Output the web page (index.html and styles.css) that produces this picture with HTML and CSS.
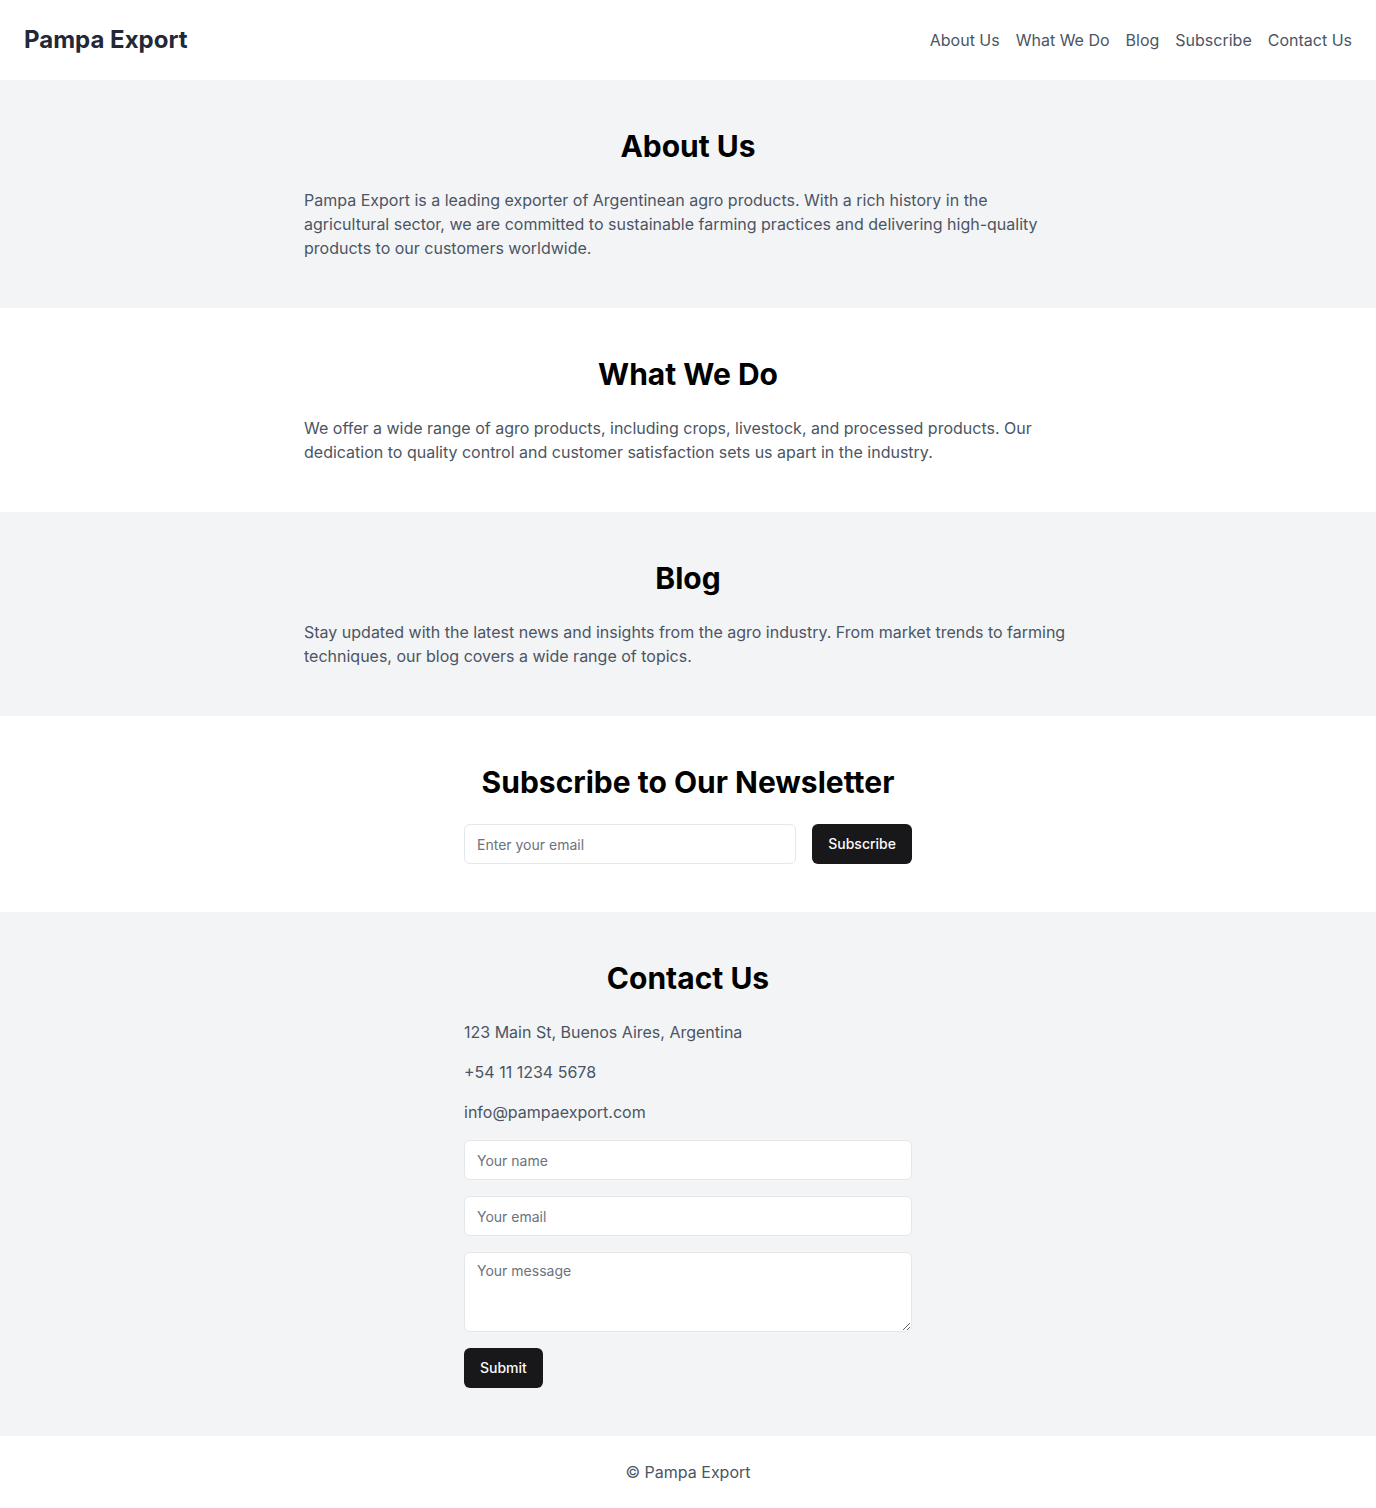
FILE: index.html
```html
<!DOCTYPE html>
<html lang="en">
<head>
<meta charset="utf-8">
<title>Pampa Export</title>
<link rel="stylesheet" href="styles.css">
</head>
<body>
<header class="site-header">
  <div class="logo">Pampa Export</div>
  <nav class="nav">
    <a href="#about">About Us</a>
    <a href="#what">What We Do</a>
    <a href="#blog">Blog</a>
    <a href="#subscribe">Subscribe</a>
    <a href="#contact">Contact Us</a>
  </nav>
</header>
<main>
  <section id="about" class="section gray">
    <h2 class="title">About Us</h2>
    <p class="text">Pampa Export is a leading exporter of Argentinean agro products. With a rich history in the agricultural sector, we are committed to sustainable farming practices and delivering high-quality products to our customers worldwide.</p>
  </section>
  <section id="what" class="section">
    <h2 class="title">What We Do</h2>
    <p class="text">We offer a wide range of agro products, including crops, livestock, and processed products. Our dedication to quality control and customer satisfaction sets us apart in the industry.</p>
  </section>
  <section id="blog" class="section gray">
    <h2 class="title">Blog</h2>
    <p class="text">Stay updated with the latest news and insights from the agro industry. From market trends to farming techniques, our blog covers a wide range of topics.</p>
  </section>
  <section id="subscribe" class="section">
    <h2 class="title">Subscribe to Our Newsletter</h2>
    <form class="sub-form">
      <input class="field grow" type="email" placeholder="Enter your email">
      <button class="btn" type="button">Subscribe</button>
    </form>
  </section>
  <section id="contact" class="section gray">
    <h2 class="title">Contact Us</h2>
    <div class="contact">
      <p class="line">123 Main St, Buenos Aires, Argentina</p>
      <p class="line">+54 11 1234 5678</p>
      <p class="line">info@pampaexport.com</p>
      <form class="contact-form">
        <input class="field" type="text" placeholder="Your name">
        <input class="field" type="email" placeholder="Your email">
        <textarea class="field area" placeholder="Your message"></textarea>
        <div><button class="btn" type="button">Submit</button></div>
      </form>
    </div>
  </section>
</main>
<footer class="footer">© Pampa Export</footer>
</body>
</html>
```

FILE: styles.css
```css
* { box-sizing: border-box; }
html, body { margin: 0; padding: 0; }
body {
  font-family: Inter, "Noto Sans", "Liberation Sans", sans-serif;
  font-size: 16px;
  line-height: 24px;
  color: #000;
  background: #fff;
}
.site-header {
  height: 80px;
  padding: 0 24px;
  display: flex;
  align-items: center;
  justify-content: space-between;
  background: #fff;
}
.logo {
  font-size: 24px;
  line-height: 32px;
  font-weight: 700;
  color: #1f2937;
}
.nav { display: flex; gap: 16px; }
.nav a {
  color: #4b5563;
  text-decoration: none;
  font-size: 16px;
  line-height: 24px;
}
.section {
  padding: 48px 0;
  background: #fff;
}
.section.gray { background: #f3f4f6; }
.title {
  margin: 0 0 24px;
  text-align: center;
  font-size: 30px;
  line-height: 36px;
  font-weight: 700;
  color: #000;
}
.text {
  max-width: 768px;
  margin: 0 auto;
  color: #4b5563;
}
.sub-form {
  max-width: 448px;
  margin: 0 auto;
  display: flex;
  gap: 16px;
}
.field {
  display: block;
  width: 100%;
  height: 40px;
  padding: 8px 12px;
  border: 1px solid #e5e7eb;
  border-radius: 6px;
  background: #fff;
  font-family: inherit;
  font-size: 14px;
  line-height: 20px;
  color: #111827;
  outline: none;
}
.field::placeholder { color: #6b7280; }
.grow { flex: 1; width: auto; }
.area { height: 80px; resize: vertical; }
.btn {
  height: 40px;
  padding: 0 16px;
  border: none;
  border-radius: 6px;
  background: #18181b;
  color: #fafafa;
  font-family: inherit;
  font-size: 14px;
  font-weight: 500;
  line-height: 20px;
  cursor: pointer;
}
.contact {
  max-width: 448px;
  margin: 0 auto;
  display: flex;
  flex-direction: column;
  gap: 16px;
}
.line { margin: 0; color: #4b5563; }
.contact-form {
  display: flex;
  flex-direction: column;
  gap: 16px;
}
.footer {
  padding: 24px 0;
  text-align: center;
  color: #4b5563;
  background: #fff;
}
```
